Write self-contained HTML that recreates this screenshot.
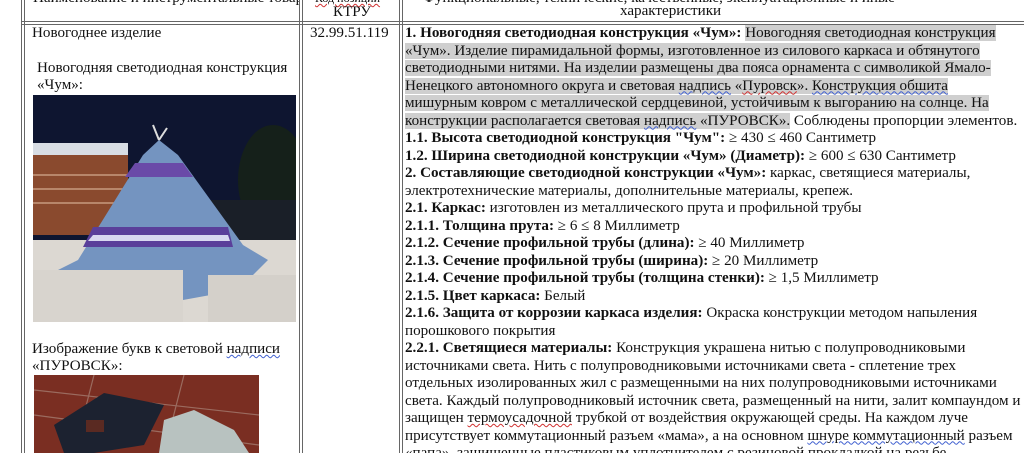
<!DOCTYPE html>
<html><head><meta charset="utf-8"><style>
html,body{margin:0;padding:0;background:#fff;width:1024px;height:453px;overflow:hidden;position:relative}
body{font-family:"Liberation Serif","Noto Serif CJK SC",serif;font-size:15.1px;color:#111}
.l{position:absolute;white-space:nowrap;line-height:17.5px}
.v{position:absolute;top:0;height:453px;width:1px;background:#666}
.h{position:absolute;left:21px;width:1003px;height:1px;background:#666}
.hl{background:#cfcfcf}
.clip{position:absolute;top:0;height:21px;overflow:hidden}
b{font-weight:bold}
.sq{text-decoration:underline wavy #4060d0;text-decoration-thickness:1px}
.sr{text-decoration:underline wavy #d03030;text-decoration-thickness:1px}
</style></head><body>
<div class="v" style="left:21px"></div><div class="v" style="left:24px"></div>
<div class="v" style="left:299px"></div><div class="v" style="left:302px"></div>
<div class="v" style="left:399px"></div><div class="v" style="left:402px"></div>
<div class="h" style="top:21px"></div><div class="h" style="top:24px"></div>

<div class="clip" style="left:25px;width:274px"><div class="l" style="left:8px;top:-10px">Наименование и инструментальные товаров</div></div>
<div class="clip" style="left:303px;width:96px"><div class="l" style="left:12px;top:-10px;font-size:12px"><span class="sr">Код позиции</span></div>
<div class="l" style="left:30px;top:4px">КТРУ</div></div>
<div class="clip" style="left:403px;width:621px"><div class="l" style="left:20px;top:-10px">Функциональные, технические, качественные, эксплуатационные и иные</div>
<div class="l" style="left:217px;top:3px">характеристики</div></div>

<div class="l" style="left:32px;top:25px">Новогоднее изделие</div>
<div class="l" style="left:37px;top:60px">Новогодняя светодиодная конструкция</div>
<div class="l" style="left:37px;top:77px">«Чум»:</div>
<svg style="position:absolute;left:33px;top:95px" width="263" height="227" viewBox="0 0 263 227">
<rect width="263" height="227" fill="#0e1530"/>
<rect x="0" y="58" width="95" height="82" fill="#8a4a2e"/>
<rect x="0" y="48" width="95" height="12" fill="#d8dde4"/>
<g stroke="#c79a7e" stroke-width="1.5"><line x1="0" y1="80" x2="95" y2="80"/><line x1="0" y1="94" x2="95" y2="94"/><line x1="0" y1="108" x2="95" y2="108"/></g>
<ellipse cx="240" cy="85" rx="35" ry="55" fill="#15201a"/>
<rect x="160" y="105" width="103" height="45" fill="#1a1f28"/>
<rect x="0" y="145" width="263" height="82" fill="#dcd8d2"/>
<line x1="126" y1="45" x2="120" y2="30" stroke="#ddd" stroke-width="2"/><line x1="126" y1="45" x2="134" y2="33" stroke="#ddd" stroke-width="2"/>
<polygon points="126,45 110,60 45,165 15,180 70,200 150,205 205,195 235,165 210,150 145,60" fill="#7494c0"/>
<polygon points="102,68 150,68 160,82 92,82" fill="#6a4aa8"/>
<polygon points="60,132 195,132 200,152 50,152" fill="#5a3f9a"/>
<polygon points="60,140 195,140 197,146 55,146" fill="#d8d8f0"/>
<rect x="0" y="175" width="150" height="52" fill="#d8d4ce"/>
<rect x="175" y="180" width="88" height="47" fill="#d4d0ca"/>
</svg>
<div class="l" style="left:32px;top:341px">Изображение букв к световой <span class="sq">надписи</span></div>
<div class="l" style="left:32px;top:358px">«ПУРОВСК»:</div>
<svg style="position:absolute;left:34px;top:375px" width="225" height="78" viewBox="0 0 225 78">
<rect width="225" height="78" fill="#7a2e22"/>
<g stroke="#a9857a" stroke-width="1.2" opacity=".7"><line x1="0" y1="15" x2="225" y2="40"/><line x1="0" y1="40" x2="225" y2="70"/><line x1="60" y1="0" x2="40" y2="78"/><line x1="150" y1="0" x2="130" y2="78"/></g>
<polygon points="20,50 70,18 130,30 110,70 60,78 30,78" fill="#1c2230"/>
<polygon points="130,45 160,35 200,55 215,78 125,78" fill="#b8c2c0"/>
<rect x="52" y="45" width="18" height="12" fill="#5a2a22"/>
</svg>

<div class="l" style="left:310px;top:25px">32.99.51.119</div>

<div class="l" style="left:405px;top:25px"><b>1. Новогодняя светодиодная конструкция «Чум»: </b><span class="hl">Новогодняя светодиодная конструкция</span></div>
<div class="l" style="left:405px;top:42.5px"><span class="hl">«Чум». Изделие пирамидальной формы, изготовленное из силового каркаса и обтянутого</span></div>
<div class="l" style="left:405px;top:60px"><span class="hl">светодиодными нитями. На изделии размещены два пояса орнамента с символикой Ямало-</span></div>
<div class="l" style="left:405px;top:77.5px"><span class="hl">Ненецкого автономного округа и световая <span class="sq">надпись</span> «<span class="sr">Пуровск</span>». <span class="sq">Конструкция  обшита</span></span></div>
<div class="l" style="left:405px;top:95px"><span class="hl">мишурным ковром с металлической сердцевиной, устойчивым к выгоранию на солнце. На</span></div>
<div class="l" style="left:405px;top:112.5px"><span class="hl">конструкции располагается световая <span class="sq">надпись</span> «ПУРОВСК».</span> Соблюдены пропорции элементов.</div>
<div class="l" style="left:405px;top:130px"><b>1.1. Высота светодиодной конструкция "Чум": </b>≥ 430 ≤ 460 Сантиметр</div>
<div class="l" style="left:405px;top:147.5px"><b>1.2. Ширина светодиодной конструкции «Чум» (Диаметр): </b>≥ 600 ≤ 630 Сантиметр</div>
<div class="l" style="left:405px;top:165px"><b>2. Составляющие светодиодной конструкции «Чум»: </b>каркас, светящиеся материалы,</div>
<div class="l" style="left:405px;top:182.5px">электротехнические материалы, дополнительные материалы, крепеж.</div>
<div class="l" style="left:405px;top:200px"><b>2.1. Каркас: </b>изготовлен из металлического прута и профильной трубы</div>
<div class="l" style="left:405px;top:217.5px"><b>2.1.1. Толщина прута: </b>≥ 6 ≤ 8 Миллиметр</div>
<div class="l" style="left:405px;top:235px"><b>2.1.2. Сечение профильной трубы (длина): </b>≥ 40 Миллиметр</div>
<div class="l" style="left:405px;top:252.5px"><b>2.1.3. Сечение профильной трубы (ширина): </b>≥ 20 Миллиметр</div>
<div class="l" style="left:405px;top:270px"><b>2.1.4. Сечение профильной трубы (толщина стенки): </b>≥ 1,5 Миллиметр</div>
<div class="l" style="left:405px;top:287.5px"><b>2.1.5. Цвет каркаса: </b>Белый</div>
<div class="l" style="left:405px;top:305px"><b>2.1.6. Защита от коррозии каркаса изделия: </b>Окраска конструкции методом напыления</div>
<div class="l" style="left:405px;top:322.5px">порошкового покрытия</div>
<div class="l" style="left:405px;top:340px"><b>2.2.1. Светящиеся материалы: </b>Конструкция украшена нитью с полупроводниковыми</div>
<div class="l" style="left:405px;top:357.5px">источниками света.  Нить с полупроводниковыми источниками света - сплетение трех</div>
<div class="l" style="left:405px;top:375px">отдельных изолированных жил с размещенными на них полупроводниковыми источниками</div>
<div class="l" style="left:405px;top:392.5px">света. Каждый полупроводниковый источник света, размещенный на нити, залит компаундом и</div>
<div class="l" style="left:405px;top:410px">защищен <span class="sr">термоусадочной</span> трубкой от воздействия окружающей среды. На каждом луче</div>
<div class="l" style="left:405px;top:427.5px">присутствует коммутационный разъем «мама», а на основном <span class="sq">шнуре  коммутационный</span> разъем</div>
<div class="l" style="left:405px;top:445px">«папа», защищенные пластиковым уплотнителем с резиновой прокладкой на резьбе</div>
</body></html>
